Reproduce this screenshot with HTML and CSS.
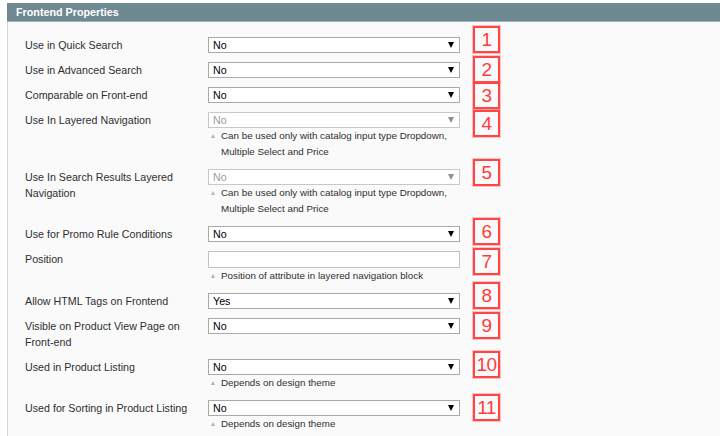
FILE: index.html
```html
<!DOCTYPE html>
<html>
<head>
<meta charset="utf-8">
<link rel="stylesheet" href="styles.css">
</head>
<body>
<div class="panel">
  <div class="panel-head">Frontend Properties</div>
  <div class="panel-body">
    <div class="row">
      <div class="label">Use in Quick Search</div>
      <div class="value"><div class="select"><span>No</span><i class="arrow"></i></div></div>
      <div class="mark m1">1</div>
    </div>
    <div class="row">
      <div class="label">Use in Advanced Search</div>
      <div class="value"><div class="select"><span>No</span><i class="arrow"></i></div></div>
      <div class="mark m2">2</div>
    </div>
    <div class="row">
      <div class="label">Comparable on Front-end</div>
      <div class="value"><div class="select"><span>No</span><i class="arrow"></i></div></div>
      <div class="mark m3">3</div>
    </div>
    <div class="row">
      <div class="label">Use In Layered Navigation</div>
      <div class="value">
        <div class="select disabled"><span>No</span><i class="arrow"></i></div>
        <div class="note">Can be used only with catalog input type Dropdown, Multiple Select and Price</div>
      </div>
      <div class="mark m4">4</div>
    </div>
    <div class="row">
      <div class="label">Use In Search Results Layered Navigation</div>
      <div class="value">
        <div class="select disabled"><span>No</span><i class="arrow"></i></div>
        <div class="note">Can be used only with catalog input type Dropdown, Multiple Select and Price</div>
      </div>
      <div class="mark m5">5</div>
    </div>
    <div class="row">
      <div class="label">Use for Promo Rule Conditions</div>
      <div class="value"><div class="select"><span>No</span><i class="arrow"></i></div></div>
      <div class="mark m6">6</div>
    </div>
    <div class="row">
      <div class="label">Position</div>
      <div class="value">
        <div class="input"></div>
        <div class="note">Position of attribute in layered navigation block</div>
      </div>
      <div class="mark m7">7</div>
    </div>
    <div class="row">
      <div class="label">Allow HTML Tags on Frontend</div>
      <div class="value"><div class="select"><span>Yes</span><i class="arrow"></i></div></div>
      <div class="mark m8">8</div>
    </div>
    <div class="row">
      <div class="label">Visible on Product View Page on Front-end</div>
      <div class="value"><div class="select"><span>No</span><i class="arrow"></i></div></div>
      <div class="mark m9">9</div>
    </div>
    <div class="row">
      <div class="label">Used in Product Listing</div>
      <div class="value">
        <div class="select"><span>No</span><i class="arrow"></i></div>
        <div class="note">Depends on design theme</div>
      </div>
      <div class="mark m10">10</div>
    </div>
    <div class="row">
      <div class="label">Used for Sorting in Product Listing</div>
      <div class="value">
        <div class="select"><span>No</span><i class="arrow"></i></div>
        <div class="note">Depends on design theme</div>
      </div>
      <div class="mark m11">11</div>
    </div>
  </div>
</div>
</body>
</html>
```

FILE: styles.css
```css
html, body {
  margin: 0;
  padding: 0;
  background: #ffffff;
  font-family: "Liberation Sans", Arial, sans-serif;
}

.panel {
  margin: 3px 0 0 7px;
}

.panel-head {
  height: 19px;
  line-height: 19px;
  background: #6f8992;
  color: #ffffff;
  font-weight: bold;
  font-size: 10.75px;
  padding-left: 9px;
  border-bottom: 1px solid #9fb0b6;
  box-sizing: border-box;
}

.panel-body {
  background: #fafafa;
  border-left: 1px solid #d6d6d6;
  padding: 15px 0 20px 17px;
  height: 420px;
  box-sizing: border-box;
}

.row {
  position: relative;
  display: grid;
  grid-template-columns: 183px 252px;
  margin-bottom: 9px;
  font-size: 10.7px;
  color: #2f2f2f;
}

.label {
  line-height: 16px;
  padding-right: 12px;
}

.select {
  height: 16px;
  box-sizing: border-box;
  background: #ffffff;
  border: 1px solid #a9a9a9;
  display: flex;
  align-items: center;
  justify-content: space-between;
  padding: 0 5px 0 4px;
  color: #000000;
  font-size: 10.7px;
}

.select .arrow {
  width: 0;
  height: 0;
  border-left: 3.5px solid transparent;
  border-right: 3.5px solid transparent;
  border-top: 6px solid #000000;
}

.select.disabled {
  border-color: #c8c8c8;
  color: #9a9a9a;
}

.select.disabled .arrow {
  border-top-color: #8f8f8f;
}

.input {
  height: 17px;
  box-sizing: border-box;
  background: #ffffff;
  border: 1px solid #c2c2c2;
}

.note {
  display: flex;
  gap: 6px;
  font-size: 9.8px;
  line-height: 16px;
  color: #2f2f2f;
  padding-left: 3px;
}

.note::before {
  content: "";
  flex: none;
  width: 0;
  height: 0;
  margin-top: 6px;
  border-left: 2.5px solid transparent;
  border-right: 2.5px solid transparent;
  border-bottom: 4px solid #b4b4b4;
}

.value .note:first-child {
  margin-top: 0;
}

.input + .note {
  margin-top: 0;
}

.mark {
  position: absolute;
  left: 448px;
  width: 27px;
  height: 27px;
  box-sizing: border-box;
  border: 2px solid #ff4545;
  box-shadow: 0 0 0 1px rgba(255, 90, 90, 0.35);
  color: #ff3c3c;
  font-size: 19px;
  line-height: 23px;
  text-align: center;
  letter-spacing: -0.5px;
}

.m1 { top: -11px; }
.m2 { top: -6px; }
.m3 { top: -5px; }
.m4 { top: -2px; }
.m5 { top: -10px; }
.m6 { top: -8px; }
.m7 { top: -3px; }
.m8 { top: -11px; }
.m9 { top: -6px; }
.m10 { top: -8px; }
.m11 { top: -6px; }
```
